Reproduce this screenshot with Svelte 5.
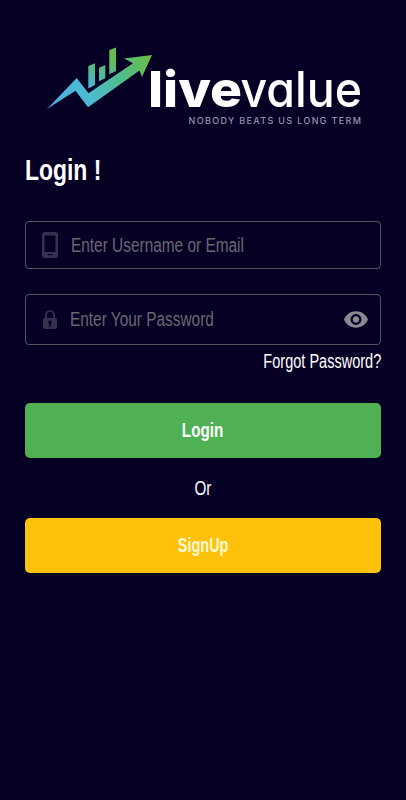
<script lang="ts">
  let username = $state('');
  let password = $state('');
  let showPassword = $state(false);

  function submit(e: SubmitEvent) {
    e.preventDefault();
  }
</script>

<main class="screen">
  <svg class="logo" viewBox="0 0 316 80" role="img" aria-label="livevalue">
    <defs>
      <linearGradient id="arrow" gradientUnits="userSpaceOnUse" x1="0" y1="58" x2="106" y2="8">
        <stop offset="0" stop-color="#4fa8e8" />
        <stop offset="0.36" stop-color="#4cbbd2" />
        <stop offset="0.68" stop-color="#50bc88" />
        <stop offset="1" stop-color="#6cbd3f" />
      </linearGradient>
      <linearGradient id="bars" gradientUnits="userSpaceOnUse" x1="50" y1="44" x2="62" y2="10">
        <stop offset="0" stop-color="#48b7cd" />
        <stop offset="1" stop-color="#63bd4d" />
      </linearGradient>
    </defs>
    <path fill="url(#arrow)" d="M1 64 30.700 33 42.500 48.300 87 18.300 78 13.500 106 10 96 32 93.500 25.500 42 62.300 29.500 45.800Z" />
    <path fill="url(#bars)" d="M42.300 21 49 18.300V40L42.300 43.500ZM53 22.700 59.300 20V33.300L53 36.300ZM63.300 5 70 2.500V26L63.300 29.300Z" />
    <text class="live" x="102" y="61.500" textLength="94" lengthAdjust="spacingAndGlyphs">live</text>
    <text class="value" x="194.500" y="61.500" textLength="121.500" lengthAdjust="spacingAndGlyphs">value</text>
    <text class="tagline" x="142.500" y="78.500" textLength="172.500">NOBODY BEATS US LONG TERM</text>
  </svg>

  <h1><span class="narrow from-left">Login !</span></h1>

  <form onsubmit={submit}>
    <label class="field username">
      <svg class="phone" viewBox="0 0 16 26" aria-hidden="true">
        <path fill-rule="evenodd" d="M3 0H13A3 3 0 0 1 16 3V23A3 3 0 0 1 13 26H3A3 3 0 0 1 0 23V3A3 3 0 0 1 3 0ZM2.500 3.500V20H13.500V3.500ZM5.500 22V23.300H10.500V22Z" />
      </svg>
      <input type="text" placeholder="Enter Username or Email" bind:value={username} />
    </label>

    <label class="field password">
      <svg class="lock" viewBox="0 0 14 19" aria-hidden="true">
        <path fill-rule="evenodd" d="M2 8V5.500A5 5.500 0 0 1 12 5.500V8A2 2 0 0 1 14 10V17A2 2 0 0 1 12 19H2A2 2 0 0 1 0 17V10A2 2 0 0 1 2 8ZM3.800 8H10.200V5.500A3.200 3.700 0 0 0 3.800 5.500ZM7 10.500A1.800 1.800 0 0 0 6.200 13.900L5.800 16.500H8.200L7.800 13.900A1.800 1.800 0 0 0 7 10.500Z" />
      </svg>
      <input type={showPassword ? 'text' : 'password'} placeholder="Enter Your Password" bind:value={password} />
      <button class="eye" type="button" aria-label="Show password" onclick={() => (showPassword = !showPassword)}>
        <svg viewBox="1 4.500 22 15" aria-hidden="true">
          <path d="M12 4.500C7 4.500 2.730 7.610 1 12c1.730 4.390 6 7.500 11 7.500s9.270-3.110 11-7.500c-1.730-4.390-6-7.500-11-7.500zM12 17c-2.760 0-5-2.240-5-5s2.240-5 5-5 5 2.240 5 5-2.240 5-5 5zm0-8c-1.660 0-3 1.340-3 3s1.340 3 3 3 3-1.340 3-3-1.340-3-3-3z" />
        </svg>
      </button>
    </label>

    <a class="forgot narrow" href="#forgot">Forgot Password?</a>
    <button class="btn login" type="submit"><span class="narrow">Login</span></button>
    <p class="or"><span class="narrow">Or</span></p>
    <button class="btn signup" type="button"><span class="narrow tight">SignUp</span></button>
  </form>
</main>

<style>
  :global(body) {
    background: #070025;
  }

  .screen {
    box-sizing: border-box;
    height: 800px;
    padding: 45px 25px 0;
    background: #070025;
    color: #fff;
    font-family: 'Liberation Sans', Arial, sans-serif;
  }

  /* condensed lettering */
  .narrow {
    display: inline-block;
    transform: scaleX(0.78);
  }

  .narrow.tight {
    transform: scaleX(0.74);
  }

  .narrow.from-left {
    transform: scaleX(0.79);
    transform-origin: left;
  }

  .logo {
    display: block;
    width: 316px;
    height: 80px;
    margin-left: 21px;
    overflow: visible;
  }

  .logo text {
    font-family: Inter, sans-serif;
    font-feature-settings: 'cv11';
    fill: #fff;
  }

  .logo .live {
    font-size: 50px;
    font-weight: 800;
  }

  .logo .value {
    font-size: 50px;
    font-weight: 500;
  }

  .logo .tagline {
    font-size: 9px;
    font-weight: 500;
    fill: #9893a8;
  }

  h1 {
    margin: 28px 0 0;
    height: 34px;
    font-size: 29px;
    line-height: 34px;
    font-weight: 700;
  }

  form {
    display: flex;
    flex-direction: column;
    margin-top: 34px;
  }

  .field {
    box-sizing: border-box;
    display: flex;
    align-items: center;
    border: 1px solid #56515f;
    border-radius: 4px;
  }

  .username {
    height: 48px;
    padding-left: 16px;
  }

  .password {
    height: 51px;
    margin-top: 25px;
    padding: 0 12px 0 17px;
  }

  .field svg {
    display: block;
    flex: none;
    fill: #37304f;
  }

  .field .phone {
    width: 16px;
    height: 26px;
    margin-right: 13px;
  }

  .field .lock {
    width: 14px;
    height: 19px;
    margin-right: 13px;
  }

  input {
    flex: 1;
    min-width: 0;
    padding: 0;
    border: 0;
    outline: 0;
    background: none;
    color: #fff;
    font: inherit;
    font-size: 19.5px;
    transform: scaleX(0.79);
    transform-origin: left;
  }

  input::placeholder {
    color: #6a6671;
    opacity: 1;
  }

  .eye {
    padding: 0;
    border: 0;
    background: none;
  }

  .eye svg {
    width: 24px;
    height: 17px;
    fill: #8b8894;
  }

  .forgot {
    align-self: flex-end;
    height: 24px;
    margin-top: 4px;
    color: #fff;
    font-size: 19.5px;
    line-height: 24px;
    text-decoration: none;
  }

  .forgot.narrow {
    transform: scaleX(0.745);
    transform-origin: right;
  }

  .btn {
    height: 55px;
    padding: 0;
    border: 0;
    border-radius: 5px;
    color: #fff;
    font: inherit;
    font-size: 19.5px;
    font-weight: 700;
  }

  .login {
    margin-top: 30px;
    background: #4fb054;
  }

  .or {
    margin: 18px 0;
    font-size: 19.5px;
    line-height: 24px;
    text-align: center;
  }

  .signup {
    background: #ffc10c;
    color: #fffbd2;
  }
</style>
